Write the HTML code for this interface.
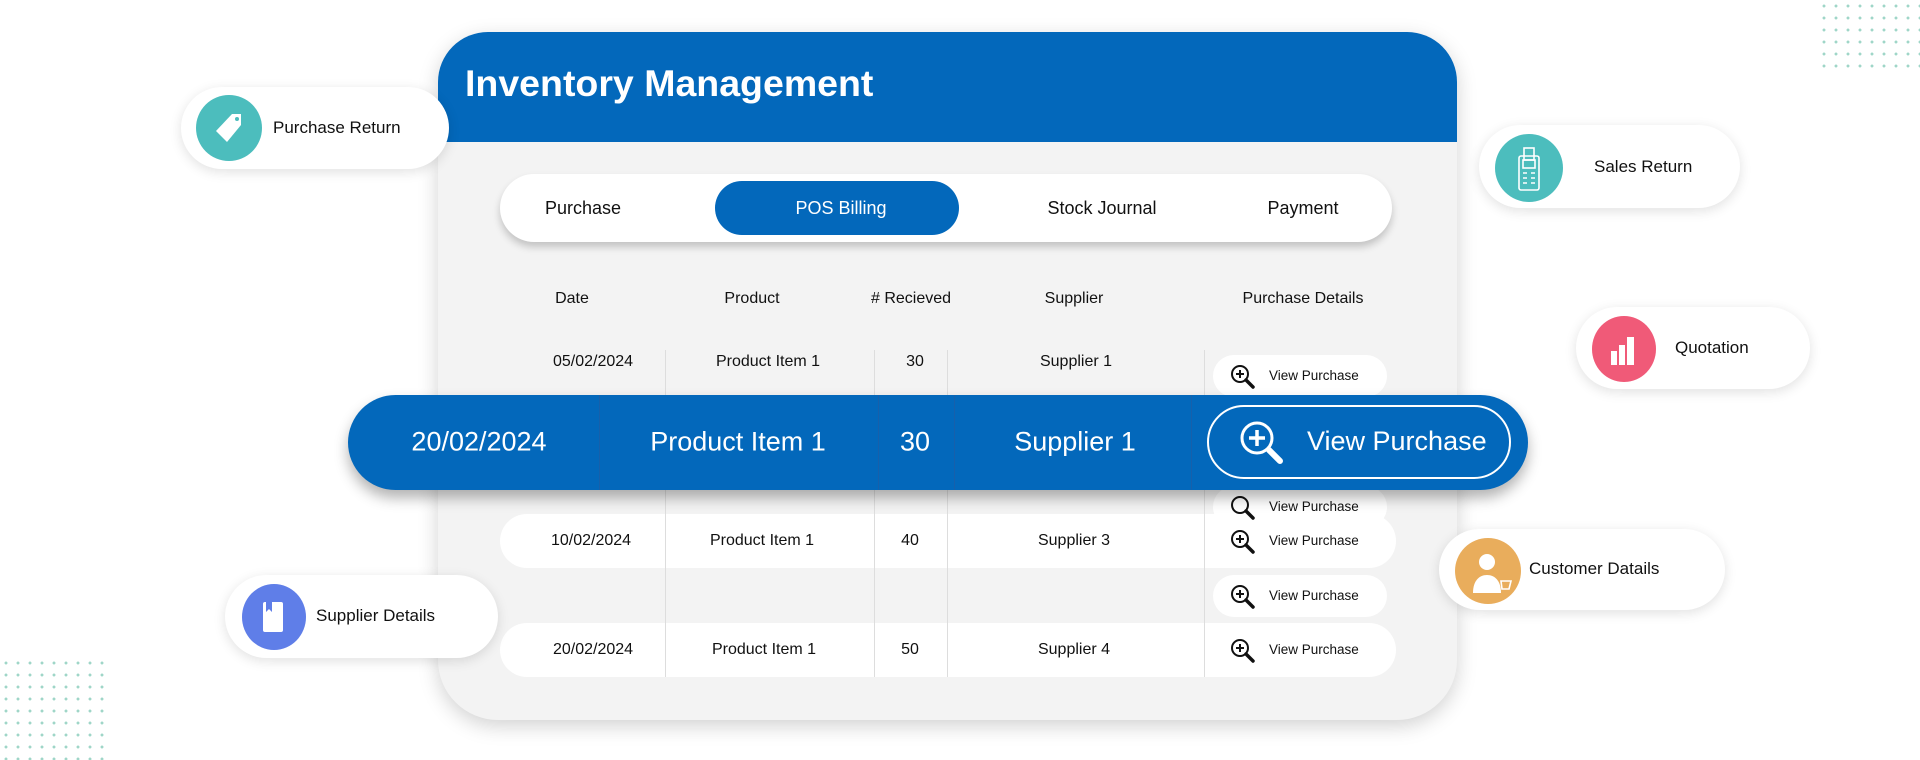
<!DOCTYPE html>
<html><head><meta charset="utf-8"><style>
*{box-sizing:border-box;margin:0;padding:0}
body{width:1920px;height:760px;overflow:hidden;background:#fff;font-family:"Liberation Sans",sans-serif;color:#111;position:relative}
.abs{position:absolute}
.dots{background-image:radial-gradient(circle,#9fd6c8 1.3px,transparent 1.6px);background-size:12px 12px}
.card{left:438px;top:32px;width:1019px;height:688px;background:#f3f3f3;border-radius:50px 50px 60px 60px;box-shadow:0 6px 20px rgba(0,0,0,.18);overflow:hidden}
.hdr{left:0;top:0;width:100%;height:110px;background:#0368bb}
.title{left:27px;top:30px;color:#fff;font-weight:bold;font-size:37.5px}
.tabs{left:62px;top:142px;width:892px;height:68px;background:#fff;border-radius:34px;box-shadow:0 5px 8px rgba(0,0,0,.2)}
.tab{position:absolute;top:0;height:68px;line-height:68px;font-size:18px;transform:translateX(-50%)}
.pos{left:215px;top:7px;width:244px;height:54px;background:#0368bb;border-radius:27px}
.t{position:absolute;font-size:16px;transform:translate(-50%,-50%);white-space:nowrap}
.row{position:absolute;left:62px;width:896px;height:54px;background:#fff;border-radius:27px}
.vl{position:absolute;width:1px;background:#ddd}
.vp{position:absolute;left:775px;width:174px;height:42px;background:#fff;border-radius:21px}
.vp svg{position:absolute;left:17px;top:9px}
.vp span{position:absolute;left:56px;top:13px;font-size:13.5px}
.bar{left:348px;top:395px;width:1180px;height:95px;background:#0368bb;border-radius:48px;box-shadow:0 8px 14px rgba(0,0,0,.3)}
.bt{position:absolute;top:47px;color:#fff;font-size:27px;transform:translate(-50%,-50%);white-space:nowrap}
.bd{position:absolute;top:0;width:1px;height:95px;background:#1760ab}
.pill{position:absolute;background:#fff;border-radius:42px;box-shadow:0 3px 12px rgba(0,0,0,.12)}
.ic{position:absolute;border-radius:50%}
.pl{position:absolute;font-size:17px;white-space:nowrap}
</style></head><body>
<div class="abs dots" style="left:1818px;top:0;width:102px;height:74px"></div>
<div class="abs dots" style="left:0;top:657px;width:104px;height:103px"></div>

<div class="abs card">
 <div class="abs hdr"></div>
 <div class="abs title">Inventory Management</div>
 <div class="abs tabs">
  <div class="abs pos"></div>
  <div class="tab" style="left:83px">Purchase</div>
  <div class="tab" style="left:341px;color:#fff">POS Billing</div>
  <div class="tab" style="left:602px">Stock Journal</div>
  <div class="tab" style="left:803px">Payment</div>
 </div>
 <div class="t" style="left:134px;top:267px">Date</div>
 <div class="t" style="left:314px;top:267px">Product</div>
 <div class="t" style="left:473px;top:267px"># Recieved</div>
 <div class="t" style="left:636px;top:267px">Supplier</div>
 <div class="t" style="left:865px;top:267px">Purchase Details</div>

 <div class="row" style="top:482px"></div>
 <div class="row" style="top:591px"></div>
 <div class="vl" style="left:227px;top:318px;height:327px"></div>
 <div class="vl" style="left:436px;top:318px;height:327px"></div>
 <div class="vl" style="left:509px;top:318px;height:327px"></div>
 <div class="vl" style="left:766px;top:318px;height:327px"></div>

 <div class="t" style="left:155px;top:330px">05/02/2024</div>
 <div class="t" style="left:330px;top:330px">Product Item 1</div>
 <div class="t" style="left:477px;top:330px">30</div>
 <div class="t" style="left:638px;top:330px">Supplier 1</div>
 <div class="vp" style="top:323px"><svg width="26" height="26" viewBox="0 0 26 26"><circle cx="10" cy="10" r="8" fill="none" stroke="#111" stroke-width="2"/><path d="M6 10h8M10 6v8" stroke="#111" stroke-width="2"/><path d="M16 16l7 7" stroke="#111" stroke-width="3.5" stroke-linecap="round"/></svg><span>View Purchase</span></div>
 <div class="vp" style="top:454px"><svg width="26" height="26" viewBox="0 0 26 26"><circle cx="10" cy="10" r="8" fill="none" stroke="#111" stroke-width="2"/><path d="M16 16l7 7" stroke="#111" stroke-width="3.5" stroke-linecap="round"/></svg><span>View Purchase</span></div>

 <div class="t" style="left:153px;top:509px">10/02/2024</div>
 <div class="t" style="left:324px;top:509px">Product Item 1</div>
 <div class="t" style="left:472px;top:509px">40</div>
 <div class="t" style="left:636px;top:509px">Supplier 3</div>
 <div class="vp" style="top:488px;background:transparent"><svg width="26" height="26" viewBox="0 0 26 26"><circle cx="10" cy="10" r="8" fill="none" stroke="#111" stroke-width="2"/><path d="M6 10h8M10 6v8" stroke="#111" stroke-width="2"/><path d="M16 16l7 7" stroke="#111" stroke-width="3.5" stroke-linecap="round"/></svg><span>View Purchase</span></div>
 <div class="vp" style="top:543px"><svg width="26" height="26" viewBox="0 0 26 26"><circle cx="10" cy="10" r="8" fill="none" stroke="#111" stroke-width="2"/><path d="M6 10h8M10 6v8" stroke="#111" stroke-width="2"/><path d="M16 16l7 7" stroke="#111" stroke-width="3.5" stroke-linecap="round"/></svg><span>View Purchase</span></div>

 <div class="t" style="left:155px;top:618px">20/02/2024</div>
 <div class="t" style="left:326px;top:618px">Product Item 1</div>
 <div class="t" style="left:472px;top:618px">50</div>
 <div class="t" style="left:636px;top:618px">Supplier 4</div>
 <div class="vp" style="top:597px;background:transparent"><svg width="26" height="26" viewBox="0 0 26 26"><circle cx="10" cy="10" r="8" fill="none" stroke="#111" stroke-width="2"/><path d="M6 10h8M10 6v8" stroke="#111" stroke-width="2"/><path d="M16 16l7 7" stroke="#111" stroke-width="3.5" stroke-linecap="round"/></svg><span>View Purchase</span></div>
</div>

<div class="abs bar">
 <div class="bd" style="left:251px"></div><div class="bd" style="left:530px"></div><div class="bd" style="left:606px"></div><div class="bd" style="left:843px"></div>
 <div class="bt" style="left:131px">20/02/2024</div>
 <div class="bt" style="left:390px">Product Item 1</div>
 <div class="bt" style="left:567px">30</div>
 <div class="bt" style="left:727px">Supplier 1</div>
 <div style="position:absolute;left:859px;top:10px;width:304px;height:74px;border:2px solid #fff;border-radius:37px">
  <svg style="position:absolute;left:30px;top:13px" width="48" height="48" viewBox="0 0 48 48"><circle cx="18" cy="18" r="15" fill="none" stroke="#fff" stroke-width="3"/><path d="M10 18h16M18 10v16" stroke="#fff" stroke-width="3.5"/><path d="M30 30l11 11" stroke="#fff" stroke-width="6" stroke-linecap="round"/></svg>
  <div style="position:absolute;left:98px;top:19px;color:#fff;font-size:27px;white-space:nowrap">View Purchase</div>
 </div>
</div>

<div class="pill" style="left:181px;top:87px;width:268px;height:82px">
 <div class="ic" style="left:15px;top:8px;width:66px;height:66px;background:#4cbdbd"></div>
 <svg style="position:absolute;left:28px;top:21px" width="40" height="40" viewBox="0 0 40 40"><path d="M23 6h9v11L18 34 7 23z" fill="#fff"/><circle cx="28" cy="11" r="2" fill="#4cbdbd"/></svg>
 <div class="pl" style="left:92px;top:31px">Purchase Return</div>
</div>
<div class="pill" style="left:1479px;top:125px;width:261px;height:83px">
 <div class="ic" style="left:16px;top:9px;width:68px;height:68px;background:#4cbdbd"></div>
 <svg style="position:absolute;left:36px;top:22px" width="28" height="44" viewBox="0 0 28 44"><g fill="none" stroke="#fff" stroke-width="1.6"><rect x="9" y="1" width="10" height="12"/><rect x="4" y="9" width="20" height="34" rx="2"/><rect x="8" y="13" width="12" height="8"/><path d="M8 26h4M16 26h4M8 31h4M16 31h4M8 36h4M16 36h4"/></g></svg>
 <div class="pl" style="left:115px;top:32px">Sales Return</div>
</div>
<div class="pill" style="left:1576px;top:307px;width:234px;height:82px">
 <div class="ic" style="left:16px;top:9px;width:64px;height:66px;background:#f05a78"></div>
 <svg style="position:absolute;left:30px;top:24px" width="36" height="36" viewBox="0 0 36 36"><g fill="#fff"><rect x="5" y="20" width="6" height="14"/><rect x="13" y="14" width="6" height="20"/><rect x="21" y="6" width="7" height="28"/></g></svg>
 <div class="pl" style="left:99px;top:31px">Quotation</div>
</div>
<div class="pill" style="left:1439px;top:529px;width:286px;height:81px">
 <div class="ic" style="left:16px;top:9px;width:66px;height:66px;background:#e9ad5c"></div>
 <svg style="position:absolute;left:26px;top:18px" width="52" height="50" viewBox="0 0 52 50"><circle cx="22" cy="15" r="8" fill="#fff"/><path d="M8 46c0-12 6-18 14-18s14 6 14 18z" fill="#fff"/><path d="M36 34h10l-2 8h-7z" fill="none" stroke="#fff" stroke-width="1.6"/></svg>
 <div class="pl" style="left:90px;top:30px">Customer Datails</div>
</div>
<div class="pill" style="left:225px;top:575px;width:273px;height:83px">
 <div class="ic" style="left:17px;top:9px;width:64px;height:66px;background:#5f7ee8"></div>
 <svg style="position:absolute;left:36px;top:26px" width="26" height="34" viewBox="0 0 26 34"><rect x="2" y="1" width="20" height="30" rx="2" fill="#fff"/><path d="M5 1h6v10l-3-3-3 3z" fill="#5f7ee8"/></svg>
 <div class="pl" style="left:91px;top:31px">Supplier Details</div>
</div>
</body></html>
